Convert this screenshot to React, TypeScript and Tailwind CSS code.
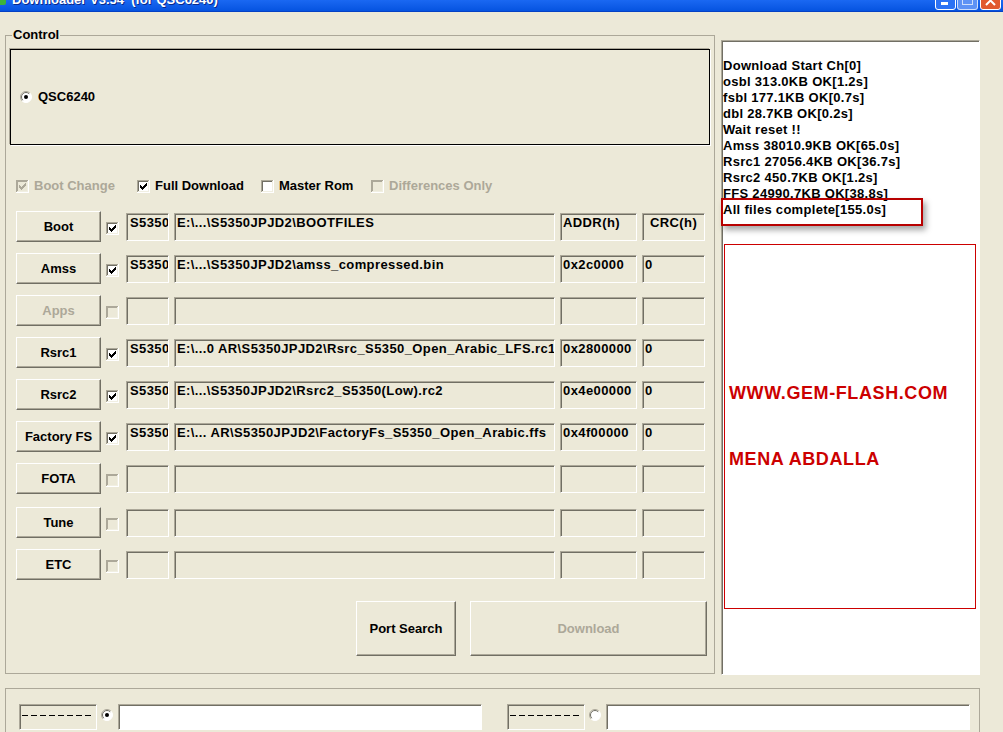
import React from 'react';

type Slot = {
  name: string;
  enabled: boolean;
  checked: boolean;
  model?: string;
  file?: string;
  addr?: string;
  crc?: string;
  header?: boolean;
  spaced?: boolean;
};

const SLOTS: Slot[] = [
  { name: 'Boot', enabled: true, checked: true, model: 'S5350', file: 'E:\\...\\S5350JPJD2\\BOOTFILES', addr: 'ADDR(h)', crc: 'CRC(h)', header: true },
  { name: 'Amss', enabled: true, checked: true, model: 'S5350', file: 'E:\\...\\S5350JPJD2\\amss_compressed.bin', addr: '0x2c0000', crc: '0' },
  { name: 'Apps', enabled: false, checked: false },
  { name: 'Rsrc1', enabled: true, checked: true, model: 'S5350', file: 'E:\\...0 AR\\S5350JPJD2\\Rsrc_S5350_Open_Arabic_LFS.rc1', addr: '0x2800000', crc: '0' },
  { name: 'Rsrc2', enabled: true, checked: true, model: 'S5350', file: 'E:\\...\\S5350JPJD2\\Rsrc2_S5350(Low).rc2', addr: '0x4e00000', crc: '0' },
  { name: 'Factory FS', enabled: true, checked: true, model: 'S5350', file: 'E:\\... AR\\S5350JPJD2\\FactoryFs_S5350_Open_Arabic.ffs', addr: '0x4f00000', crc: '0' },
  { name: 'FOTA', enabled: true, checked: false },
  { name: 'Tune', enabled: true, checked: false, spaced: true },
  { name: 'ETC', enabled: true, checked: false },
];

const LOG = [
  'Download Start Ch[0]',
  'osbl 313.0KB OK[1.2s]',
  'fsbl 177.1KB OK[0.7s]',
  'dbl 28.7KB OK[0.2s]',
  'Wait reset !!',
  'Amss 38010.9KB OK[65.0s]',
  'Rsrc1 27056.4KB OK[36.7s]',
  'Rsrc2 450.7KB OK[1.2s]',
  'FFS 24990.7KB OK[38.8s]',
  'All files complete[155.0s]',
];

// classic 3D edges
const raised =
  'bg-[#ECE9D8] border border-t-white border-l-white border-r-[#716F64] border-b-[#716F64] shadow-[inset_-1px_-1px_0_#ACA899]';
const sunken =
  'border border-t-[#ACA899] border-l-[#ACA899] border-r-white border-b-white shadow-[inset_1px_1px_0_#716F64]';

function CheckBox({ checked, disabled }: { checked: boolean; disabled?: boolean }) {
  const fill = disabled ? '#ECE9D8' : '#FFFFFF';
  const mark = disabled ? '#ACA899' : '#000000';
  const inner = disabled ? '#ACA899' : '#716F64';
  return (
    <svg width="13" height="13" viewBox="0 0 13 13" shapeRendering="crispEdges" className="shrink-0">
      <rect x="0" y="0" width="13" height="13" fill="#FFFFFF" />
      <rect x="0" y="0" width="12" height="12" fill="#ACA899" />
      <rect x="1" y="1" width="11" height="11" fill="#F1EFE2" />
      <rect x="1" y="1" width="10" height="10" fill={inner} />
      <rect x="2" y="2" width="9" height="9" fill={fill} />
      {checked && (
        <g fill={mark}>
          <rect x="9" y="3" width="1" height="1" />
          <rect x="8" y="4" width="2" height="1" />
          <rect x="3" y="5" width="1" height="1" />
          <rect x="7" y="5" width="3" height="1" />
          <rect x="3" y="6" width="2" height="1" />
          <rect x="6" y="6" width="3" height="1" />
          <rect x="3" y="7" width="5" height="1" />
          <rect x="4" y="8" width="3" height="1" />
          <rect x="5" y="9" width="1" height="1" />
        </g>
      )}
    </svg>
  );
}

function Radio({ checked }: { checked: boolean }) {
  return (
    <svg width="12" height="12" viewBox="0 0 12 12" className="shrink-0">
      <circle cx="6" cy="6" r="5.5" fill="#FFFFFF" />
      <path d="M2.1 9.9 A5.5 5.5 0 0 1 9.9 2.1" stroke="#ACA899" fill="none" />
      <path d="M2.8 9.2 A4.5 4.5 0 0 1 9.2 2.8" stroke="#716F64" fill="none" />
      <path d="M9.9 2.1 A5.5 5.5 0 0 1 2.1 9.9" stroke="#FFFFFF" fill="none" />
      {checked && <circle cx="6" cy="6" r="2" fill="#000000" />}
    </svg>
  );
}

function Option({ label, checked, disabled, width }: { label: string; checked: boolean; disabled?: boolean; width: string }) {
  return (
    <div className={`flex items-center gap-[5px] ${width} ${disabled ? 'text-[#ACA899]' : ''}`}>
      <CheckBox checked={checked} disabled={disabled} />
      <span>{label}</span>
    </div>
  );
}

function Field({ width, text, indent = 'pl-[2px]' }: { width: string; text?: string; indent?: string }) {
  return (
    <div className={`${width} h-[28px] shrink-0 ${sunken} overflow-hidden whitespace-nowrap tracking-[0.4px] pt-[1px] ${indent}`}>
      {text}
    </div>
  );
}

function SlotRow({ slot }: { slot: Slot }) {
  return (
    <div className={`flex items-center h-[31px] ${slot.spaced ? 'mt-[2px]' : ''}`}>
      <div className={`w-[85px] h-[31px] shrink-0 ${raised} flex items-center justify-center ${slot.enabled ? '' : 'text-[#ACA899]'}`}>
        {slot.name}
      </div>
      <div className="ml-[5px] mt-[3px]">
        <CheckBox checked={slot.checked} disabled={!slot.checked} />
      </div>
      <div className="ml-[7px]">
        <Field width="w-[43px]" text={slot.model} indent="pl-[3px]" />
      </div>
      <div className="ml-[5px]">
        <Field width="w-[381px]" text={slot.file} />
      </div>
      <div className="ml-[5px]">
        <Field width="w-[77px]" text={slot.addr} />
      </div>
      <div className="ml-[5px]">
        <Field width="w-[63px]" text={slot.crc} indent={slot.header ? 'pl-[7px]' : 'pl-[2px]'} />
      </div>
    </div>
  );
}

function TitleBar() {
  return (
    <div className="h-[12px] flex items-start overflow-hidden bg-gradient-to-b from-[#1A68F2] to-[#0553E0] border-b border-[#0541C4]">
      <div className="w-[6px] h-[5px] bg-[#3DB33A] rounded-br-[2px] shrink-0" />
      <span className="ml-[6px] -mt-[8px] text-white leading-[16px] whitespace-nowrap [text-shadow:1px_1px_0_#0A2A8A]">
        Downloader V3.54&nbsp; (for QSC6240)
      </span>
      <div className="ml-auto mr-[2px] flex items-start">
        <div className="w-[21px] h-[21px] -mt-[11px] rounded-[3px] border border-white bg-[#2C72F4] flex items-end pl-[5px] pb-[4px]">
          <div className="w-[7px] h-[3px] bg-white" />
        </div>
        <div className="ml-[1px] w-[21px] h-[21px] -mt-[11px] rounded-[3px] border border-white/70 bg-[#5D92F5] flex items-end justify-center pb-[4px]">
          <div className="w-[11px] h-[10px] border border-white/70 border-t-[3px]" />
        </div>
        <div className="ml-[2px] w-[21px] h-[21px] -mt-[11px] rounded-[3px] border border-white bg-[#E1582E] flex items-end justify-center pb-[3px]">
          <svg width="11" height="11" viewBox="0 0 11 11">
            <path d="M1 1 L10 10 M10 1 L1 10" stroke="#FFFFFF" strokeWidth="2" />
          </svg>
        </div>
      </div>
    </div>
  );
}

function LogPanel() {
  return (
    <div className={`relative ml-[6px] mt-[13px] w-[259px] h-[635px] bg-white ${sunken} pl-[1px] pt-[17px]`}>
      {LOG.map((line) => (
        <div key={line} className="leading-[16px] whitespace-nowrap tracking-[0.3px]">
          {line}
        </div>
      ))}
      <div className="ml-[1px] mt-[26px] w-[252px] h-[365px] border border-[#CC0000] text-[#CC0000] text-[18px] leading-[20px] tracking-[0.6px] pl-[4px] pt-[138px]">
        <div>WWW.GEM-FLASH.COM</div>
        <div className="mt-[46px]">MENA ABDALLA</div>
      </div>
      {/* highlight frame over the last log line */}
      <div className="absolute left-[-1px] top-[157px] w-[202px] h-[28px] border-2 border-[#B80000] shadow-[3px_4px_6px_rgba(0,0,0,0.35)]" />
    </div>
  );
}

function PortBox({ selected }: { selected: boolean }) {
  return (
    <div className="flex items-start">
      <div className={`w-[78px] h-[26px] ${sunken} pt-[10px] px-[2px]`}>
        <div className="h-[1px] bg-[repeating-linear-gradient(90deg,#000_0_6px,transparent_6px_9px)]" />
      </div>
      <div className="ml-[4px] mt-[5px]">
        <Radio checked={selected} />
      </div>
      <div className={`ml-[5px] w-[364px] h-[26px] bg-white ${sunken}`} />
    </div>
  );
}

export default function App() {
  return (
    <div className="w-[1003px] h-[732px] overflow-hidden bg-[#ECE9D8] text-black text-[13px] leading-[16px] font-bold font-['Liberation_Sans',Arial,sans-serif] select-none">
      <TitleBar />
      <div className="flex pl-[5px] pt-[15px]">
        <fieldset className="w-[710px] h-[647px] shrink-0 border border-[#ACA899] p-0 m-0">
          <legend className="ml-[6px] px-[1px] leading-[16px]">Control</legend>

          <div className="mx-[4px] mt-[6px] h-[96px] border border-black shadow-[-1px_-1px_0_#ACA899,1px_1px_0_#FFFFFF] flex items-center pl-[9px] gap-[6px]">
            <Radio checked />
            <span>QSC6240</span>
          </div>

          <div className="mt-[33px] pl-[10px] flex items-center h-[16px]">
            <Option label="Boot Change" checked disabled width="w-[121px]" />
            <Option label="Full Download" checked width="w-[124px]" />
            <Option label="Master Rom" checked={false} width="w-[110px]" />
            <Option label="Differences Only" checked={false} disabled width="w-[150px]" />
          </div>

          <div className="mt-[17px] pl-[10px] flex flex-col gap-[11px]">
            {SLOTS.map((slot) => (
              <SlotRow key={slot.name} slot={slot} />
            ))}
          </div>

          <div className="mt-[21px] pr-[7px] flex justify-end gap-[14px]">
            <div className={`w-[100px] h-[55px] ${raised} flex items-center justify-center`}>Port Search</div>
            <div className={`w-[237px] h-[55px] ${raised} flex items-center justify-center text-[#ACA899]`}>Download</div>
          </div>
        </fieldset>

        <LogPanel />
      </div>

      <fieldset className="ml-[5px] mt-[13px] w-[975px] h-[80px] border border-[#ACA899] m-0 pl-[13px] pt-[15px] flex gap-[25px]">
        <PortBox selected />
        <PortBox selected={false} />
      </fieldset>
    </div>
  );
}
